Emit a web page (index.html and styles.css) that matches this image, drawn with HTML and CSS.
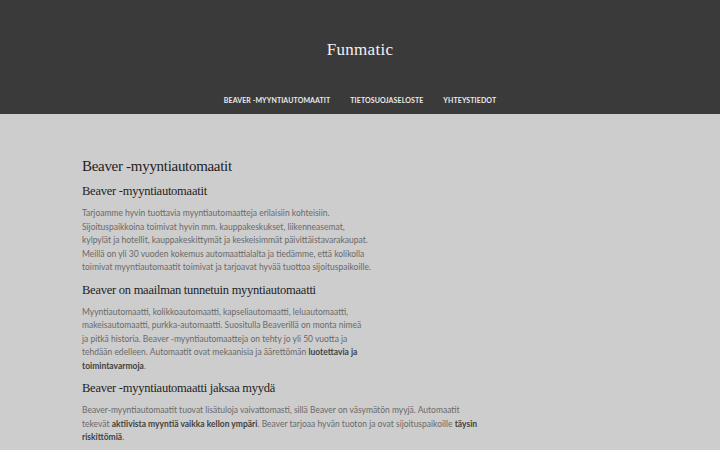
FILE: index.html
```html
<!DOCTYPE html>
<html lang="fi">
<head>
<meta charset="utf-8">
<title>Funmatic</title>
<link rel="stylesheet" href="styles.css">
</head>
<body>
<header class="site-header">
  <div class="site-title">Funmatic</div>
  <nav class="site-nav">
    <a href="#">Beaver -myyntiautomaatit</a>
    <a href="#">Tietosuojaseloste</a>
    <a href="#">Yhteystiedot</a>
  </nav>
</header>
<main class="content">
  <h1 class="page-title">Beaver -myyntiautomaatit</h1>
  <h2 class="sec">Beaver -myyntiautomaatit</h2>
  <p>Tarjoamme hyvin tuottavia myyntiautomaatteja erilaisiin kohteisiin.<br>Sijoituspaikkoina toimivat hyvin mm. kauppakeskukset, liikenneasemat,<br>kylpylät ja hotellit, kauppakeskittymät ja keskeisimmät päivittäistavarakaupat.<br>Meillä on yli 30 vuoden kokemus automaattialalta ja tiedämme, että kolikolla<br>toimivat myyntiautomaatit toimivat ja tarjoavat hyvää tuottoa sijoituspaikoille.</p>
  <h2 class="sec">Beaver on maailman tunnetuin myyntiautomaatti</h2>
  <p>Myyntiautomaatti, kolikkoautomaatti, kapseliautomaatti, leluautomaatti,<br>makeisautomaatti, purkka-automaatti. Suositulla Beaverillä on monta nimeä<br>ja pitkä historia. Beaver -myyntiautomaatteja on tehty jo yli 50 vuotta ja<br>tehdään edelleen. Automaatit ovat mekaanisia ja äärettömän <strong>luotettavia ja<br>toimintavarmoja</strong>.</p>
  <h2 class="sec">Beaver -myyntiautomaatti jaksaa myydä</h2>
  <p>Beaver-myyntiautomaatit tuovat lisätuloja vaivattomasti, sillä Beaver on väsymätön myyjä. Automaatit<br>tekevät <strong>aktiivista myyntiä vaikka kellon ympäri</strong>. Beaver tarjoaa hyvän tuoton ja ovat sijoituspaikoille <strong>täysin<br>riskittömiä</strong>.</p>
</main>
</body>
</html>
```
FILE: styles.css
```css
html, body {
  margin: 0;
  padding: 0;
}
body {
  background: #cdcdcd;
  font-family: "Lato", "Liberation Sans", sans-serif;
  width: 720px;
  height: 450px;
  overflow: hidden;
}
.site-header {
  background: #3a3a3a;
  height: 114px;
  box-sizing: border-box;
  padding-top: 38px;
  text-align: center;
}
.site-title {
  font-family: "Liberation Serif", "DejaVu Serif", serif;
  color: #f2f2f2;
  font-size: 17px;
  line-height: 24px;
  letter-spacing: 0.3px;
}
.site-nav {
  display: flex;
  justify-content: center;
  gap: 20px;
  margin-top: 33px;
}
.site-nav a {
  color: #eaeaea;
  text-decoration: none;
  text-transform: uppercase;
  font-size: 7px;
  font-weight: 700;
  letter-spacing: 0.1px;
  line-height: 10px;
}
.content {
  padding: 42px 0 0 82px;
  width: 420px;
}
.page-title {
  font-family: "Liberation Serif", "DejaVu Serif", serif;
  font-weight: 400;
  font-size: 15px;
  letter-spacing: -0.3px;
  line-height: 20px;
  color: #1e1e1e;
  margin: 0 0 6px;
}
.sec {
  font-family: "Liberation Serif", "DejaVu Serif", serif;
  font-weight: 400;
  font-size: 12.5px;
  letter-spacing: -0.25px;
  line-height: 18px;
  color: #1e1e1e;
  margin: 0 0 7px;
}
p {
  font-size: 8.5px;
  line-height: 13.5px;
  color: #6a6a6a;
  margin: 0 0 6px;
  white-space: nowrap;
}
strong {
  color: #424242;
  font-weight: 700;
}
```
